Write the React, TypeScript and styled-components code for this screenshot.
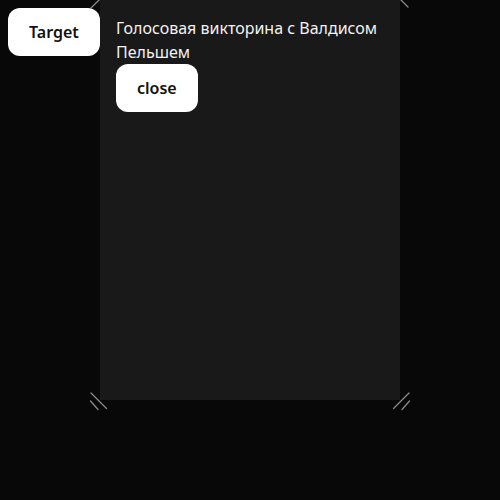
import React from "react";
import styled, { createGlobalStyle } from "styled-components";

const Global = createGlobalStyle`
  html, body { margin: 0; padding: 0; background: #080808; }
  body { font-family: "Noto Sans", "Open Sans", sans-serif; }
`;

const Page = styled.div`
  position: relative;
  width: 500px;
  height: 500px;
  background: #080808;
  overflow: hidden;
`;

const Panel = styled.section`
  position: relative;
  width: 300px;
  height: 400px;
  margin: 0 auto;
  box-sizing: border-box;
  padding: 16px;
  background: #191919;
  display: flex;
  flex-direction: column;
  align-items: flex-start;
`;

const Title = styled.p`
  margin: 0;
  color: #f2f2f2;
  font-size: 16px;
  line-height: 24px;
  font-weight: 400;
`;

const PillButton = styled.button`
  height: 48px;
  padding: 0 21px;
  border: none;
  border-radius: 12px;
  background: #ffffff;
  color: #111111;
  font-family: "Noto Sans", "Open Sans", sans-serif;
  font-size: 16px;
  font-weight: 600;
  cursor: pointer;
`;

const FloatingButton = styled(PillButton)`
  position: absolute;
  top: 8px;
  left: 8px;
  z-index: 2;
`;

const Marks = styled.svg`
  position: absolute;
  left: 0;
  top: 0;
  width: 500px;
  height: 500px;
  pointer-events: none;
  z-index: 3;
`;

export default function App() {
  return (
    <>
      <Global />
      <Page>
        <Panel>
          <Title>Голосовая викторина с Валдисом Пельшем</Title>
          <PillButton>close</PillButton>
        </Panel>
        <FloatingButton>Target</FloatingButton>
        <Marks viewBox="0 0 500 500">
          <g stroke="#8a8a8a" strokeWidth="1.3" strokeLinecap="round" fill="none">
            <line x1="91" y1="8" x2="99" y2="0" />
            <line x1="401" y1="0" x2="408" y2="7" />
            <line x1="91" y1="393" x2="106.5" y2="408.5" />
            <line x1="90.5" y1="401" x2="98" y2="409.5" />
            <line x1="409" y1="393" x2="393.5" y2="408.5" />
            <line x1="409.5" y1="401" x2="402" y2="409.5" />
          </g>
        </Marks>
      </Page>
    </>
  );
}
